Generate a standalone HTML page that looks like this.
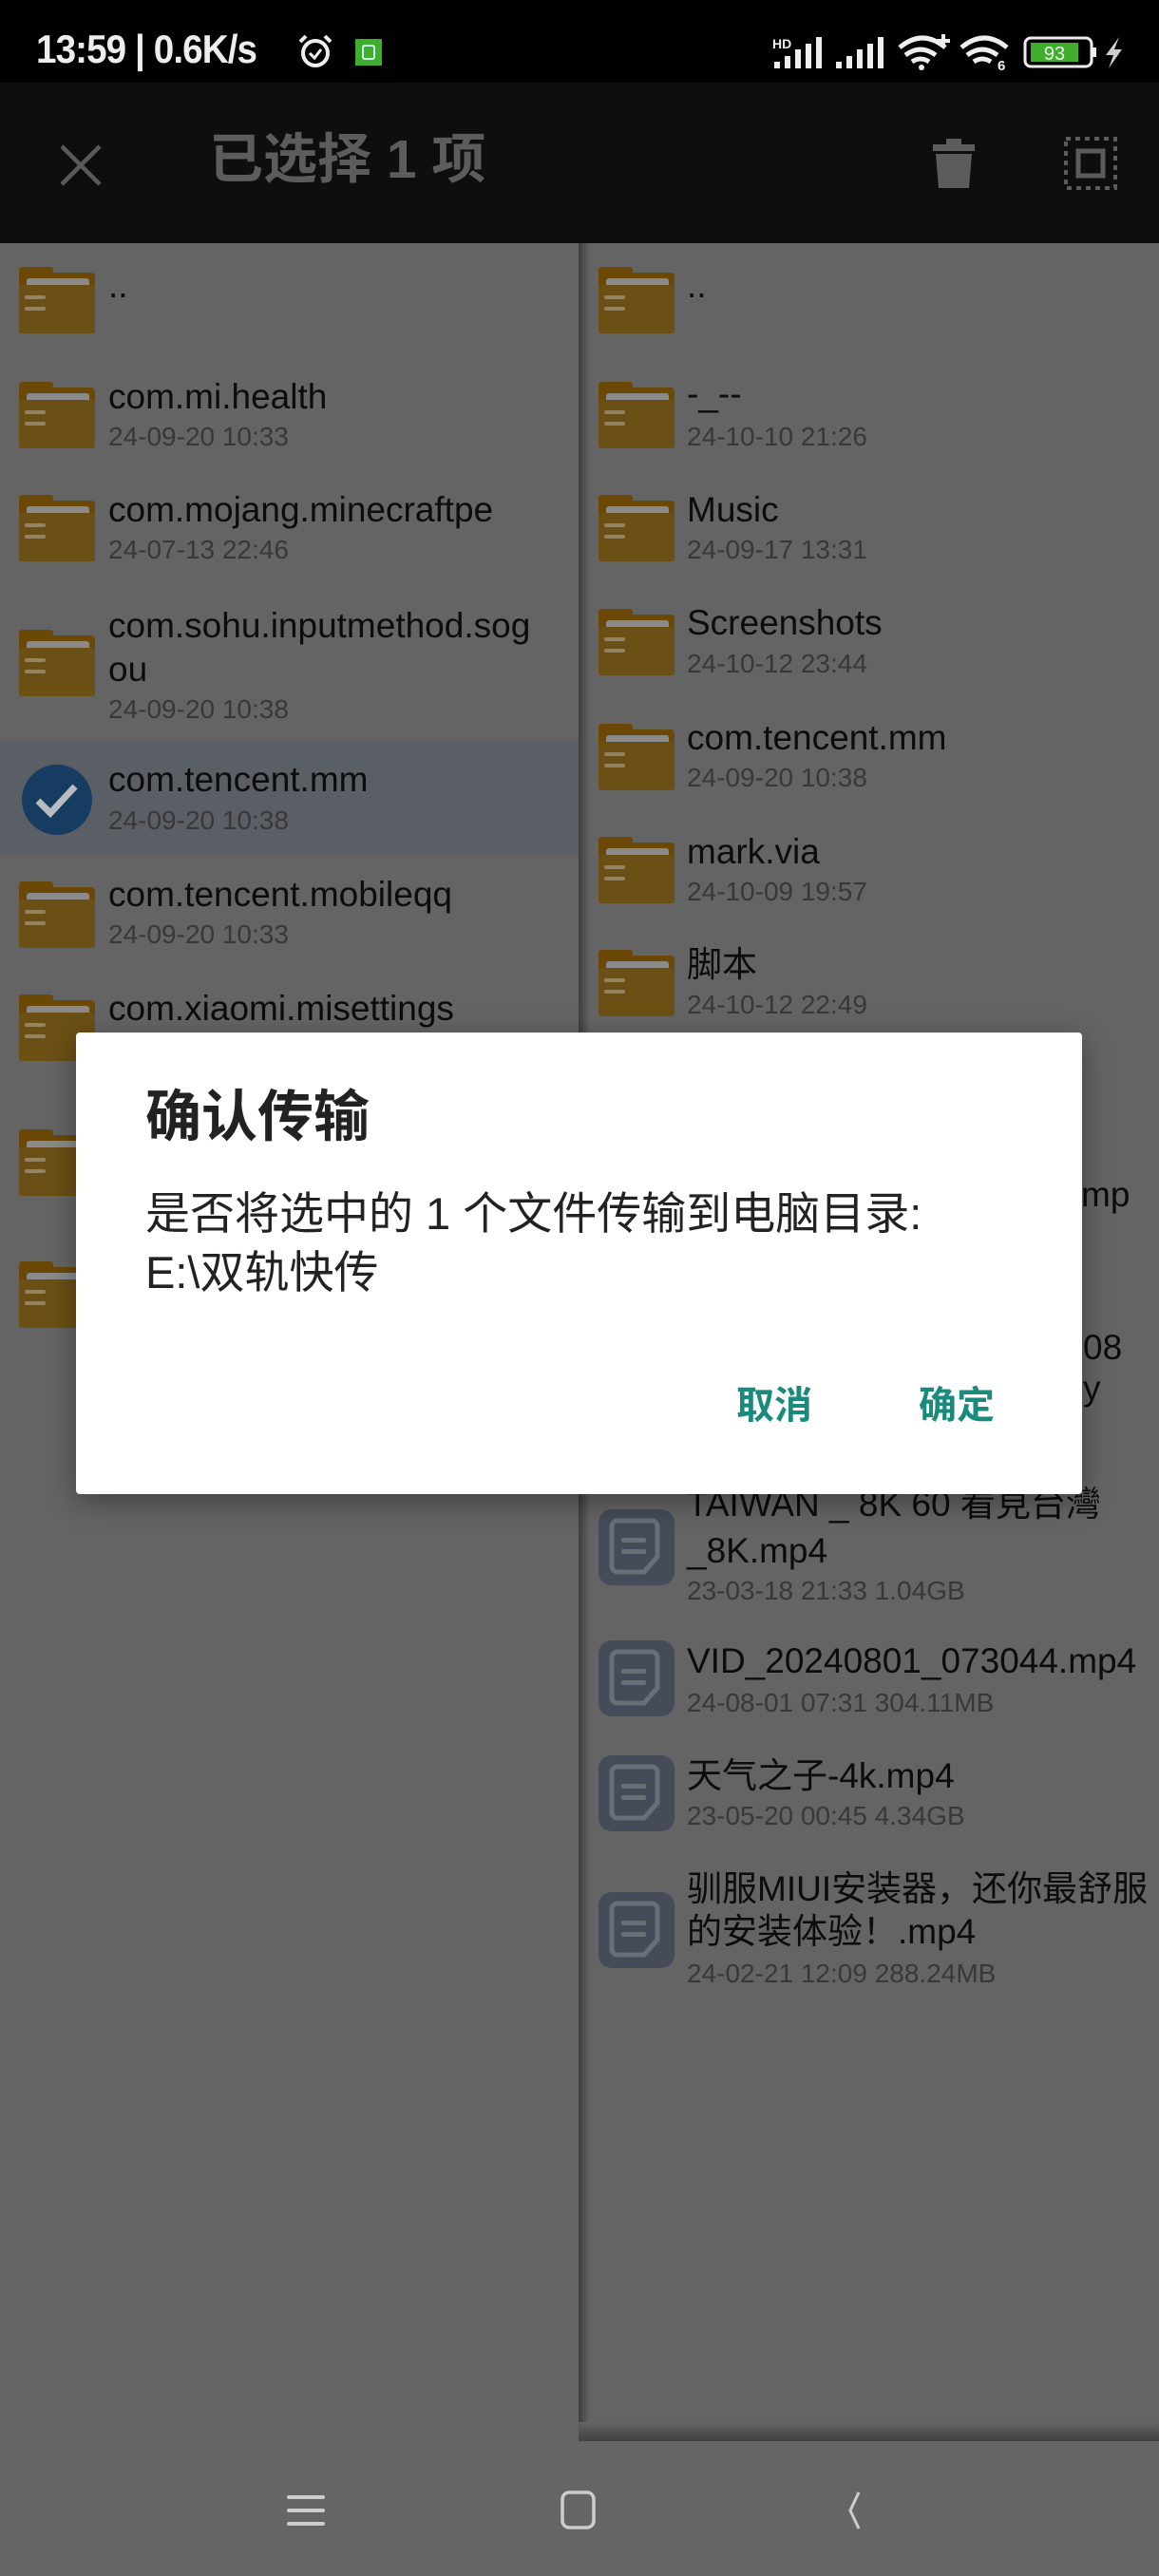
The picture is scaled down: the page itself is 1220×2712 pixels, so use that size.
<!DOCTYPE html>
<html><head><meta charset="utf-8"><style>
*{margin:0;padding:0;box-sizing:border-box}
body{width:1220px;height:2712px;position:relative;overflow:hidden;background:#646464;font-family:"Liberation Sans","Noto Sans CJK SC",sans-serif}
.a{position:absolute}
.t{position:absolute;font-size:37px;color:#0c0c0c;white-space:nowrap;line-height:1}
.d{position:absolute;font-size:28px;color:#383838;white-space:nowrap;line-height:1}
.fi{position:absolute;width:80px;height:70px}
</style></head><body>
<!-- status bar -->
<div class="a" style="left:0;top:0;width:1220px;height:87px;background:#000"></div>
<div class="a" style="left:38px;top:31px;font-size:42px;color:#eee;line-height:1;white-space:nowrap;letter-spacing:-1px;font-weight:bold;transform:scaleX(.92);transform-origin:left">13:59 | 0.6K/s</div>
<svg class="a" style="left:312px;top:34px" width="40" height="40" viewBox="0 0 40 40"><circle cx="20" cy="22" r="13" fill="none" stroke="#eee" stroke-width="4"/><path d="M14 22l5 5 7-9" fill="none" stroke="#eee" stroke-width="3"/><path d="M4 10l6-6M36 10l-6-6" stroke="#eee" stroke-width="4"/></svg>
<div class="a" style="left:374px;top:41px;width:28px;height:28px;background:#3fae2c"></div>
<div class="a" style="left:381px;top:47px;width:14px;height:16px;border:2px solid #cfe;border-radius:3px"></div>
<svg class="a" style="left:813px;top:36px" width="370" height="40" viewBox="813 36 370 40">
<text x="813" y="51" font-size="14" font-weight="bold" fill="#eee" font-family="Liberation Sans">HD</text>
<rect x="815" y="65" width="6" height="7" fill="#eee"/><rect x="826" y="59" width="6" height="13" fill="#eee"/><rect x="837" y="52" width="6" height="20" fill="#eee"/><rect x="848" y="46" width="6" height="26" fill="#eee"/><rect x="859" y="39" width="6" height="33" fill="#eee"/>
<rect x="880" y="65" width="6" height="7" fill="#eee"/><rect x="891" y="59" width="6" height="13" fill="#eee"/><rect x="902" y="52" width="6" height="20" fill="#eee"/><rect x="913" y="46" width="6" height="26" fill="#eee"/><rect x="924" y="39" width="6" height="33" fill="#eee"/>
<path d="M947 50q24-20 48 0M953 58q16-12 32 0M960 65q9-6 18 0" fill="none" stroke="#eee" stroke-width="5"/><circle cx="970" cy="71" r="3" fill="#eee"/><path d="M993 36v14M986 43h14" stroke="#eee" stroke-width="4"/>
<path d="M1012 50q24-20 48 0M1018 58q16-12 32 0M1025 65q9-6 18 0" fill="none" stroke="#eee" stroke-width="5"/><text x="1050" y="74" font-size="15" font-weight="bold" fill="#eee" font-family="Liberation Sans">6</text>
<rect x="1079" y="40" width="70" height="30" rx="6" fill="none" stroke="#eee" stroke-width="3"/><rect x="1085" y="45" width="50" height="20" fill="#3fae2c"/><text x="1110" y="63" font-size="20" fill="#eee" text-anchor="middle" font-family="Liberation Sans">93</text><rect x="1150" y="50" width="4" height="10" fill="#eee"/>
<path d="M1178 39l-14 19h8l-5 14 14-20h-8z" fill="#ccc"/>
</svg>
<!-- toolbar -->
<div class="a" style="left:0;top:87px;width:1220px;height:169px;background:#0e0e0e"></div>
<svg class="a" style="left:62px;top:152px" width="46" height="44" viewBox="0 0 46 44"><path d="M3 2l40 40M43 2L3 42" stroke="#5a5a5a" stroke-width="4.5"/></svg>
<div class="a" style="left:220px;top:140px;font-size:57px;color:#5c5c5c;line-height:1;white-space:nowrap;font-weight:bold">已选择 1 项</div>
<svg class="a" style="left:982px;top:146px" width="44" height="54" viewBox="0 0 44 54"><rect x="0" y="6" width="44" height="7" fill="#5c5c5c"/><rect x="14" y="0" width="16" height="8" fill="#5c5c5c"/><path d="M3 16h38l-3 36H6z" fill="#5c5c5c"/></svg>
<svg class="a" style="left:1120px;top:144px" width="56" height="56" viewBox="0 0 56 56"><g fill="none" stroke="#5c5c5c" stroke-width="4" stroke-dasharray="5 5"><rect x="2" y="2" width="52" height="52"/></g><rect x="15" y="15" width="26" height="26" fill="none" stroke="#5c5c5c" stroke-width="5"/></svg>

<svg width="0" height="0" style="position:absolute"><defs>
<symbol id="fold" viewBox="0 0 80 70"><rect x="0" y="0" width="36" height="14" rx="3" fill="#6c4806"/><rect x="0" y="6" width="80" height="64" rx="4" fill="#6c4806"/><rect x="8" y="12" width="66" height="12" rx="3" fill="#8a8a8a"/><rect x="0" y="19" width="80" height="51" rx="3" fill="#6a5014"/><rect x="6" y="30" width="22" height="4" rx="2" fill="#948362"/><rect x="6" y="42" width="22" height="4" rx="2" fill="#948362"/></symbol>
<symbol id="file" viewBox="0 0 80 80"><rect x="0" y="0" width="80" height="80" rx="14" fill="#454b58"/><path d="M14 18a6 6 0 0 1 6-6h36a6 6 0 0 1 6 6v32l-14 16H20a6 6 0 0 1-6-6z" fill="none" stroke="#6a6e76" stroke-width="5"/><rect x="24" y="30" width="26" height="5" rx="2" fill="#6a6e76"/><rect x="24" y="42" width="26" height="5" rx="2" fill="#6a6e76"/></symbol>
</defs></svg>

<!-- left panel -->
<div class="a" style="left:0;top:780px;width:609px;height:120px;background:#5a5f65"></div>
<svg class="fi" style="left:20px;top:281px"><use href="#fold"/></svg><div class="t" style="left:114px;top:282px">..</div>
<svg class="fi" style="left:20px;top:402px"><use href="#fold"/></svg><div class="t" style="left:114px;top:399px">com.mi.health</div><div class="d" style="left:114px;top:446px">24-09-20 10:33</div>
<svg class="fi" style="left:20px;top:521px"><use href="#fold"/></svg><div class="t" style="left:114px;top:518px">com.mojang.minecraftpe</div><div class="d" style="left:114px;top:565px">24-07-13 22:46</div>
<svg class="fi" style="left:20px;top:663px"><use href="#fold"/></svg><div class="t" style="left:114px;top:640px">com.sohu.inputmethod.sog</div><div class="t" style="left:114px;top:686px">ou</div><div class="d" style="left:114px;top:733px">24-09-20 10:38</div>
<svg class="a" style="left:22px;top:804px" width="76" height="76" viewBox="0 0 76 76"><circle cx="38" cy="38" r="37" fill="#163c62"/><path d="M18 39l13 13 26-28" fill="none" stroke="#b8bcc0" stroke-width="7"/></svg>
<div class="t" style="left:114px;top:802px">com.tencent.mm</div><div class="d" style="left:114px;top:850px">24-09-20 10:38</div>
<svg class="fi" style="left:20px;top:928px"><use href="#fold"/></svg><div class="t" style="left:114px;top:923px">com.tencent.mobileqq</div><div class="d" style="left:114px;top:970px">24-09-20 10:33</div>
<svg class="fi" style="left:20px;top:1047px"><use href="#fold"/></svg><div class="t" style="left:114px;top:1043px">com.xiaomi.misettings</div><div class="d" style="left:114px;top:1090px">24-09-20 10:33</div>
<svg class="fi" style="left:20px;top:1189px"><use href="#fold"/></svg>
<svg class="fi" style="left:20px;top:1328px"><use href="#fold"/></svg>

<!-- right panel -->
<div class="a" style="left:609px;top:256px;width:12px;height:2314px;background:linear-gradient(90deg,#3e3e3e,#646464)"></div>
<div class="a" style="left:609px;top:2550px;width:611px;height:20px;background:linear-gradient(180deg,#646464,#404040)"></div>
<svg class="fi" style="left:630px;top:281px"><use href="#fold"/></svg><div class="t" style="left:723px;top:282px">..</div>
<svg class="fi" style="left:630px;top:402px"><use href="#fold"/></svg><div class="t" style="left:723px;top:396px">-_--</div><div class="d" style="left:723px;top:446px">24-10-10 21:26</div>
<svg class="fi" style="left:630px;top:521px"><use href="#fold"/></svg><div class="t" style="left:723px;top:518px">Music</div><div class="d" style="left:723px;top:565px">24-09-17 13:31</div>
<svg class="fi" style="left:630px;top:641px"><use href="#fold"/></svg><div class="t" style="left:723px;top:637px">Screenshots</div><div class="d" style="left:723px;top:685px">24-10-12 23:44</div>
<svg class="fi" style="left:630px;top:762px"><use href="#fold"/></svg><div class="t" style="left:723px;top:758px">com.tencent.mm</div><div class="d" style="left:723px;top:805px">24-09-20 10:38</div>
<svg class="fi" style="left:630px;top:881px"><use href="#fold"/></svg><div class="t" style="left:723px;top:878px">mark.via</div><div class="d" style="left:723px;top:925px">24-10-09 19:57</div>
<svg class="fi" style="left:630px;top:1000px"><use href="#fold"/></svg><div class="t" style="left:723px;top:997px">脚本</div><div class="d" style="left:723px;top:1044px">24-10-12 22:49</div>
<div class="t" style="left:1138px;top:1239px">mp</div>
<div class="t" style="left:1140px;top:1400px">08</div>
<div class="t" style="left:1140px;top:1443px">y</div>
<svg class="a" style="left:630px;top:1589px" width="80" height="80"><use href="#file"/></svg><div class="t" style="left:723px;top:1565px">TAIWAN _ 8K 60 看見台灣</div><div class="t" style="left:723px;top:1614px">_8K.mp4</div><div class="d" style="left:723px;top:1661px">23-03-18 21:33 1.04GB</div>
<svg class="a" style="left:630px;top:1727px" width="80" height="80"><use href="#file"/></svg><div class="t" style="left:723px;top:1730px">VID_20240801_073044.mp4</div><div class="d" style="left:723px;top:1779px">24-08-01 07:31 304.11MB</div>
<svg class="a" style="left:630px;top:1848px" width="80" height="80"><use href="#file"/></svg><div class="t" style="left:723px;top:1851px">天气之子-4k.mp4</div><div class="d" style="left:723px;top:1898px">23-05-20 00:45 4.34GB</div>
<svg class="a" style="left:630px;top:1992px" width="80" height="80"><use href="#file"/></svg><div class="t" style="left:723px;top:1970px">驯服MIUI安装器，还你最舒服</div><div class="t" style="left:723px;top:2015px">的安装体验！.mp4</div><div class="d" style="left:723px;top:2064px">24-02-21 12:09 288.24MB</div>

<!-- nav bar -->
<div class="a" style="left:0;top:2570px;width:1220px;height:142px;background:#656565"></div>
<svg class="a" style="left:300px;top:2620px" width="620" height="50" viewBox="300 2620 620 50">
<g stroke="#cdcdcd" stroke-width="4" stroke-linecap="round"><path d="M304 2629h36M304 2643h36M304 2657h36"/></g>
<rect x="592" y="2624" width="33" height="37" rx="7" fill="none" stroke="#cdcdcd" stroke-width="3.5"/>
<path d="M904 2624l-9 19 9 19" fill="none" stroke="#cdcdcd" stroke-width="3"/>
</svg>

<!-- dialog -->
<div class="a" style="left:80px;top:1087px;width:1059px;height:486px;background:#fff;border-radius:4px;box-shadow:0 8px 30px rgba(0,0,0,.35)"></div>
<div class="a" style="left:153px;top:1147px;font-size:59px;color:#222;line-height:1;white-space:nowrap;font-weight:bold">确认传输</div>
<div class="a" style="left:153px;top:1247px;font-size:47px;color:#222;line-height:62px;white-space:nowrap">是否将选中的 1 个文件传输到电脑目录:<br>E:\双轨快传</div>
<div class="a" style="left:775px;top:1460px;font-size:40px;color:#1a8a7c;font-weight:bold;line-height:1">取消</div>
<div class="a" style="left:967px;top:1460px;font-size:40px;color:#1a8a7c;font-weight:bold;line-height:1">确定</div>
</body></html>
